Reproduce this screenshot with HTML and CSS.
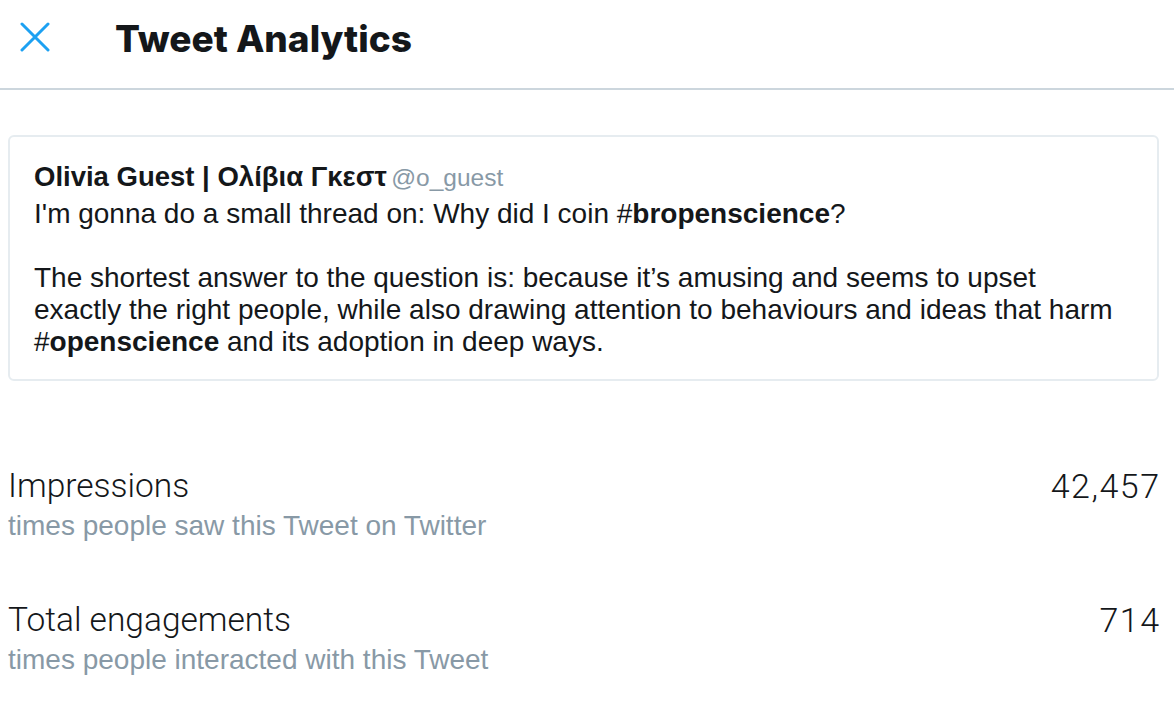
FILE: index.html
```html
<!DOCTYPE html>
<html>
<head>
<meta charset="utf-8">
<link rel="stylesheet" href="styles.css">
</head>
<body>
<header class="topbar">
  <button class="close" aria-label="Close">
    <svg width="30" height="30" viewBox="0 0 30 30"><path d="M2 2 L28 28 M28 2 L2 28" stroke="#1da1f2" stroke-width="3" stroke-linecap="round" fill="none"/></svg>
  </button>
  <h1 class="title">Tweet Analytics</h1>
</header>
<main class="content">
  <section class="tweet">
    <div class="author"><span class="name">Olivia Guest | Ολίβια Γκεστ</span> <span class="handle">@o_guest</span></div>
    <p class="text">I'm gonna do a small thread on: Why did I coin #<b>bropenscience</b>?</p>
    <p class="text gap">The shortest answer to the question is: because it’s amusing and seems to upset<br>exactly the right people, while also drawing attention to behaviours and ideas that harm<br>#<b>openscience</b> and its adoption in deep ways.</p>
  </section>
  <section class="metrics">
    <div class="metric">
      <div class="metric-info">
        <div class="metric-label">Impressions</div>
        <div class="metric-desc">times people saw this Tweet on Twitter</div>
      </div>
      <div class="metric-value">42,457</div>
    </div>
    <div class="metric">
      <div class="metric-info">
        <div class="metric-label">Total engagements</div>
        <div class="metric-desc">times people interacted with this Tweet</div>
      </div>
      <div class="metric-value">714</div>
    </div>
  </section>
</main>
</body>
</html>
```
FILE: styles.css
```css
html, body {
  margin: 0;
  padding: 0;
  background: #ffffff;
}
body {
  font-family: "Liberation Sans", Arial, sans-serif;
  color: #14171a;
}
.topbar {
  display: flex;
  align-items: center;
  height: 88px;
  border-bottom: 2px solid #ccd6dd;
  box-sizing: content-box;
}
.close {
  background: none;
  border: 0;
  padding: 0;
  margin: -14px 0 0 20px;
  width: 30px;
  height: 30px;
  display: flex;
}
.title {
  margin: -12px 0 0 65px;
  font-family: Inter, "Liberation Sans", sans-serif;
  font-size: 37px;
  font-weight: 800;
  letter-spacing: 0;
  color: #14171a;
}
.content {
  padding: 45px 15px 0 8px;
}
.tweet {
  border: 2px solid #e6ecf0;
  border-radius: 6px;
  padding: 22px 8px 24px 24px;
  height: 246px;
  box-sizing: border-box;
}
.author {
  line-height: 35px;
}
.name {
  font-size: 27.5px;
  font-weight: 700;
}
.handle {
  font-size: 24.5px;
  color: #8899a6;
}
.text {
  margin: 0;
  font-size: 28px;
  line-height: 32px;
  white-space: nowrap;
}
.text b { font-weight: 700; }
.gap { margin-top: 32px; }
.metrics {
  padding-top: 85px;
}
.metric {
  display: flex;
  justify-content: space-between;
  align-items: flex-start;
  height: 134px;
}
.metric-label {
  font-family: Roboto, "Liberation Sans", sans-serif;
  font-weight: 300;
  font-size: 33.5px;
  line-height: 40px;
  color: #14171a;
}
.metric-desc {
  font-size: 28px;
  line-height: 40px;
  color: #8899a6;
}
.metric-value {
  font-family: Roboto, "Liberation Sans", sans-serif;
  font-weight: 300;
  font-size: 34px;
  line-height: 40px;
  letter-spacing: 1.5px;
  margin-right: -1.5px;
  color: #14171a;
}
```
